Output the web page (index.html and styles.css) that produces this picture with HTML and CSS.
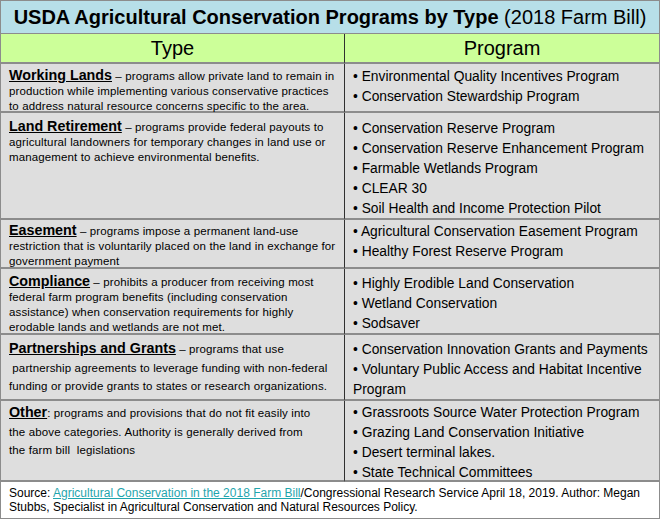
FILE: index.html
```html
<!DOCTYPE html>
<html>
<head>
<meta charset="utf-8">
<link rel="stylesheet" href="styles.css">
</head>
<body>
<div class="tbl">
  <div class="title"><b>USDA Agricultural Conservation Programs by Type</b> (2018 Farm Bill)</div>
  <div class="head head-left">Type</div>
  <div class="head">Program</div>

  <div class="type lh15 pt4"><span class="cat">Working Lands</span> – programs allow private land to remain in<br>production while implementing various conservative practices<br>to address natural resource concerns specific to the area.</div>
  <div class="prog pt3"><p>• Environmental Quality Incentives Program</p><p>• Conservation Stewardship Program</p></div>

  <div class="type lh15 pt6"><span class="cat">Land Retirement</span> – programs provide federal payouts to<br>agricultural landowners for temporary changes in land use or<br>management to achieve environmental benefits.</div>
  <div class="prog pt6"><p>• Conservation Reserve Program</p><p>• Conservation Reserve Enhancement Program</p><p>• Farmable Wetlands Program</p><p>• CLEAR 30</p><p>• Soil Health and Income Protection Pilot</p></div>

  <div class="type lh15 pt3"><span class="cat">Easement</span> – programs impose a permanent land-use<br>restriction that is voluntarily placed on the land in exchange for<br>government payment</div>
  <div class="prog pt2"><p>• Agricultural Conservation Easement Program</p><p>• Healthy Forest Reserve Program</p></div>

  <div class="type lh15 pt5"><span class="cat">Compliance</span> – prohibits a producer from receiving most<br>federal farm program benefits (including conservation<br>assistance) when conservation requirements for highly<br>erodable lands and wetlands are not met.</div>
  <div class="prog pt5"><p>• Highly Erodible Land Conservation</p><p>• Wetland Conservation</p><p>• Sodsaver</p></div>

  <div class="type lh18 pt4"><span class="cat">Partnerships and Grants</span> – programs that use<br>&nbsp;partnership agreements to leverage funding with non-federal<br>funding or provide grants to states or research organizations.</div>
  <div class="prog pt5"><p>• Conservation Innovation Grants and Payments</p><p>• Voluntary Public Access and Habitat Incentive<br>Program</p></div>

  <div class="type lh18 pt2"><span class="cat">Other</span>: programs and provisions that do not fit easily into<br>the above categories. Authority is generally derived from<br>the farm bill&nbsp; legislations</div>
  <div class="prog pt2"><p>• Grassroots Source Water Protection Program</p><p>• Grazing Land Conservation Initiative</p><p>• Desert terminal lakes.</p><p>• State Technical Committees</p></div>

  <div class="src">Source: <a class="link" href="#">Agricultural Conservation in the 2018 Farm Bill</a>/Congressional Research Service April 18, 2019. Author: Megan<br>Stubbs, Specialist in Agricultural Conservation and Natural Resources Policy.</div>
</div>
</body>
</html>
```

FILE: styles.css
```css
html, body {
  margin: 0;
  padding: 0;
  background: #ffffff;
}
body {
  font-family: "Liberation Sans", Arial, sans-serif;
  color: #000;
}
.tbl {
  width: 660px;
  box-sizing: border-box;
  border: 1px solid #8c8c8c;
  display: grid;
  grid-template-columns: 344px 1fr;
  grid-template-rows: 33px 30px 49px 107px 49px 66px 66px 81px 36px;
}
.tbl > div {
  box-sizing: border-box;
  min-width: 0;
}
.title {
  grid-column: 1 / 3;
  background: #b7dfe8;
  border-bottom: 1px solid #8c8c8c;
  text-align: center;
  font-size: 20px;
  line-height: 32px;
  white-space: nowrap;
}
.head {
  background: #ccff99;
  border-bottom: 2px solid #8c8c8c;
  text-align: center;
  font-size: 20px;
  line-height: 28px;
}
.head-left {
  border-right: 1px solid #303030;
}
.type {
  background: #dedede;
  border-right: 1px solid #303030;
  border-bottom: 2px solid #8c8c8c;
  font-size: 11.5px;
  letter-spacing: 0.13px;
  padding-left: 8px;
  white-space: nowrap;
}
.lh15 { line-height: 15px; }
.lh18 { line-height: 18.5px; }
.pt1 { padding-top: 1px; }
.pt2 { padding-top: 2px; }
.pt3 { padding-top: 3px; }
.pt4 { padding-top: 4px; }
.pt5 { padding-top: 5px; }
.pt6 { padding-top: 6px; }
.cat {
  font-weight: bold;
  text-decoration: underline;
  font-size: 14.3px;
  letter-spacing: 0;
}
.prog {
  background: #dedede;
  border-bottom: 2px solid #8c8c8c;
  font-size: 13.8px;
  line-height: 20px;
  padding-left: 8px;
  white-space: nowrap;
}
.prog p {
  margin: 0;
}
.src {
  grid-column: 1 / 3;
  background: #ffffff;
  font-size: 12px;
  line-height: 14px;
  padding: 4px 0 0 8px;
  white-space: nowrap;
}
.link {
  color: #1fa5ad;
  text-decoration: underline;
}
```
